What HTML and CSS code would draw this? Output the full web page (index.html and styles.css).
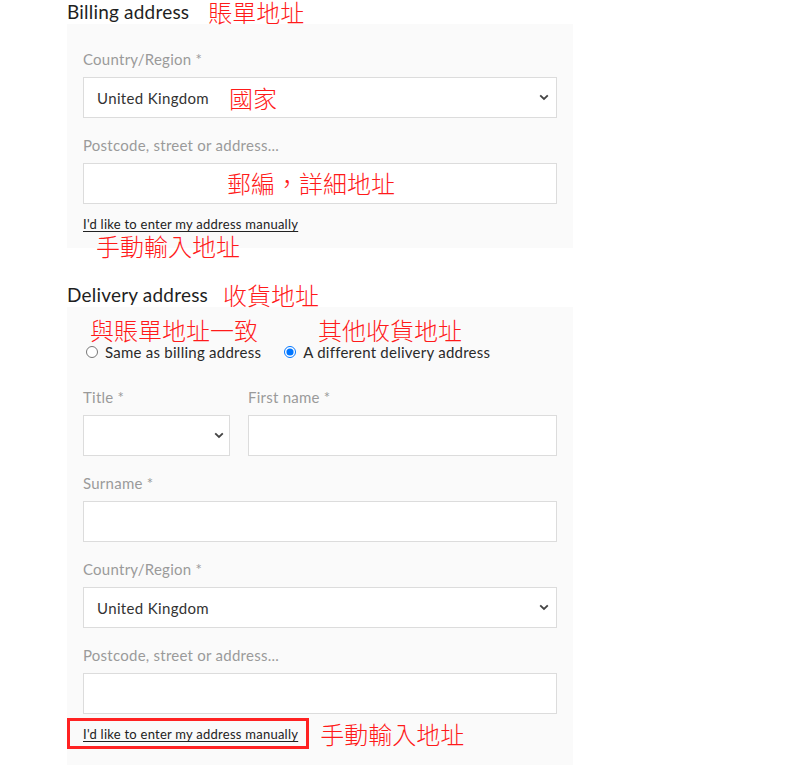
FILE: index.html
```html
<!DOCTYPE html>
<html lang="en">
<head>
<meta charset="utf-8">
<title>Address form</title>
<link rel="stylesheet" href="styles.css">
</head>
<body>
<div class="page">
  <h2 class="heading">Billing address<span class="note note-head1">賬單地址</span></h2>
  <section class="panel panel-billing">
    <div class="field">
      <div class="label">Country/Region *</div>
      <div class="box select">
        <span class="value">United Kingdom</span>
        <svg class="chev" width="10" height="7" viewBox="0 0 10 7"><path d="M1.2 1.3 L5 5 L8.8 1.3" fill="none" stroke="#444" stroke-width="1.8"/></svg>
        <span class="note note-country">國家</span>
      </div>
    </div>
    <div class="field field-last">
      <div class="label">Postcode, street or address...</div>
      <div class="box">
        <span class="note note-postcode">郵編，詳細地址</span>
      </div>
    </div>
    <div class="manual">
      <a class="manual-link" href="#">I'd like to enter my address manually</a>
      <span class="note note-manual1">手動輸入地址</span>
    </div>
  </section>

  <h2 class="heading heading-delivery">Delivery address<span class="note note-head2">收貨地址</span></h2>
  <section class="panel panel-delivery">
    <div class="radio-notes">
      <span class="note note-same">與賬單地址一致</span>
      <span class="note note-other">其他收貨地址</span>
    </div>
    <div class="radios">
      <label class="radio"><input type="radio" name="d"><span>Same as billing address</span></label>
      <label class="radio radio-second"><input type="radio" name="d" checked><span>A different delivery address</span></label>
    </div>
    <div class="name-row">
      <div class="field">
        <div class="label">Title *</div>
        <div class="box select select-title">
          <span class="value"></span>
          <svg class="chev" width="10" height="7" viewBox="0 0 10 7"><path d="M1.2 1.3 L5 5 L8.8 1.3" fill="none" stroke="#444" stroke-width="1.8"/></svg>
        </div>
      </div>
      <div class="field">
        <div class="label">First name *</div>
        <div class="box"></div>
      </div>
    </div>
    <div class="field">
      <div class="label">Surname *</div>
      <div class="box"></div>
    </div>
    <div class="field">
      <div class="label">Country/Region *</div>
      <div class="box select">
        <span class="value">United Kingdom</span>
        <svg class="chev" width="10" height="7" viewBox="0 0 10 7"><path d="M1.2 1.3 L5 5 L8.8 1.3" fill="none" stroke="#444" stroke-width="1.8"/></svg>
      </div>
    </div>
    <div class="field field-last">
      <div class="label">Postcode, street or address...</div>
      <div class="box"></div>
    </div>
    <div class="manual manual-boxed">
      <a class="manual-link" href="#">I'd like to enter my address manually</a>
      <span class="note note-manual2">手動輸入地址</span>
    </div>
  </section>
</div>
</body>
</html>
```

FILE: styles.css
```css
html, body {
  margin: 0;
  padding: 0;
  background: #ffffff;
}

body {
  font-family: Lato, "Open Sans", "Liberation Sans", sans-serif;
  color: #222222;
  height: 765px;
  overflow: hidden;
}

.page {
  padding-left: 67px;
}

.heading {
  margin: 0;
  font-size: 19px;
  letter-spacing: 0.2px;
  font-weight: 400;
  line-height: 24px;
  height: 24px;
  color: #1f1f1f;
  display: flex;
  align-items: center;
}

.heading-delivery {
  margin-top: 35px;
}

.note {
  display: block;
  font-family: "Noto Sans CJK TC", "Noto Sans CJK SC", sans-serif;
  color: #ff1a1a;
  font-size: 24px;
  line-height: 24px;
  height: 24px;
  font-weight: 300;
  letter-spacing: 0;
  white-space: nowrap;
}

.note-head1 {
  margin-left: 19px;
}

.note-head2 {
  margin-left: 15px;
}

.panel {
  width: 506px;
  box-sizing: border-box;
  background: #fafafa;
  padding: 25px 16px 15px 16px;
}

.panel-delivery {
  padding-top: 11px;
  padding-bottom: 40px;
}

.field {
  margin-bottom: 17px;
}

.field-last {
  margin-bottom: 11px;
}

.label {
  font-size: 15px;
  letter-spacing: 0.25px;
  line-height: 20px;
  height: 20px;
  color: #9a9a9a;
  margin-bottom: 8px;
}

.box {
  position: relative;
  height: 41px;
  box-sizing: border-box;
  background: #ffffff;
  border: 1px solid #dcdcdc;
  display: flex;
  align-items: center;
}

.select {
  justify-content: space-between;
  padding: 0 7px 0 13px;
}

.value {
  font-size: 15px;
  letter-spacing: 0.35px;
  color: #333333;
}

.chev {
  display: block;
}

.note-country {
  position: absolute;
  left: 145px;
  top: 8px;
}

.note-postcode {
  position: absolute;
  left: 143px;
  top: 7px;
}

.manual {
  position: relative;
  display: flex;
  align-items: center;
  height: 18px;
}

.manual-link {
  font-size: 13px;
  letter-spacing: 0.25px;
  line-height: 18px;
  color: #222222;
  text-decoration: underline;
  text-underline-offset: 2px;
  position: relative;
}

.note-manual1 {
  position: absolute;
  left: 13px;
  top: 19px;
}

.manual-boxed .manual-link::before {
  content: "";
  position: absolute;
  left: -16px;
  right: -11px;
  top: -7px;
  bottom: -6px;
  border: 3px solid #ff2222;
}

.note-manual2 {
  margin-left: 22px;
}

.radio-notes {
  display: flex;
  height: 24px;
  padding-left: 7px;
}

.note-other {
  margin-left: 60px;
}

.radios {
  display: flex;
  align-items: center;
  height: 20px;
  margin-bottom: 25px;
}

.radio {
  display: flex;
  align-items: center;
  font-size: 15px;
  letter-spacing: 0.25px;
  color: #2a2a2a;
}

.radio input {
  margin: 0 7px 0 3px;
  width: 12px;
  height: 12px;
}

.radio-second {
  margin-left: 20px;
}

.name-row {
  display: grid;
  grid-template-columns: 147px 1fr;
  column-gap: 18px;
}

.select-title {
  padding-right: 5px;
}
```
